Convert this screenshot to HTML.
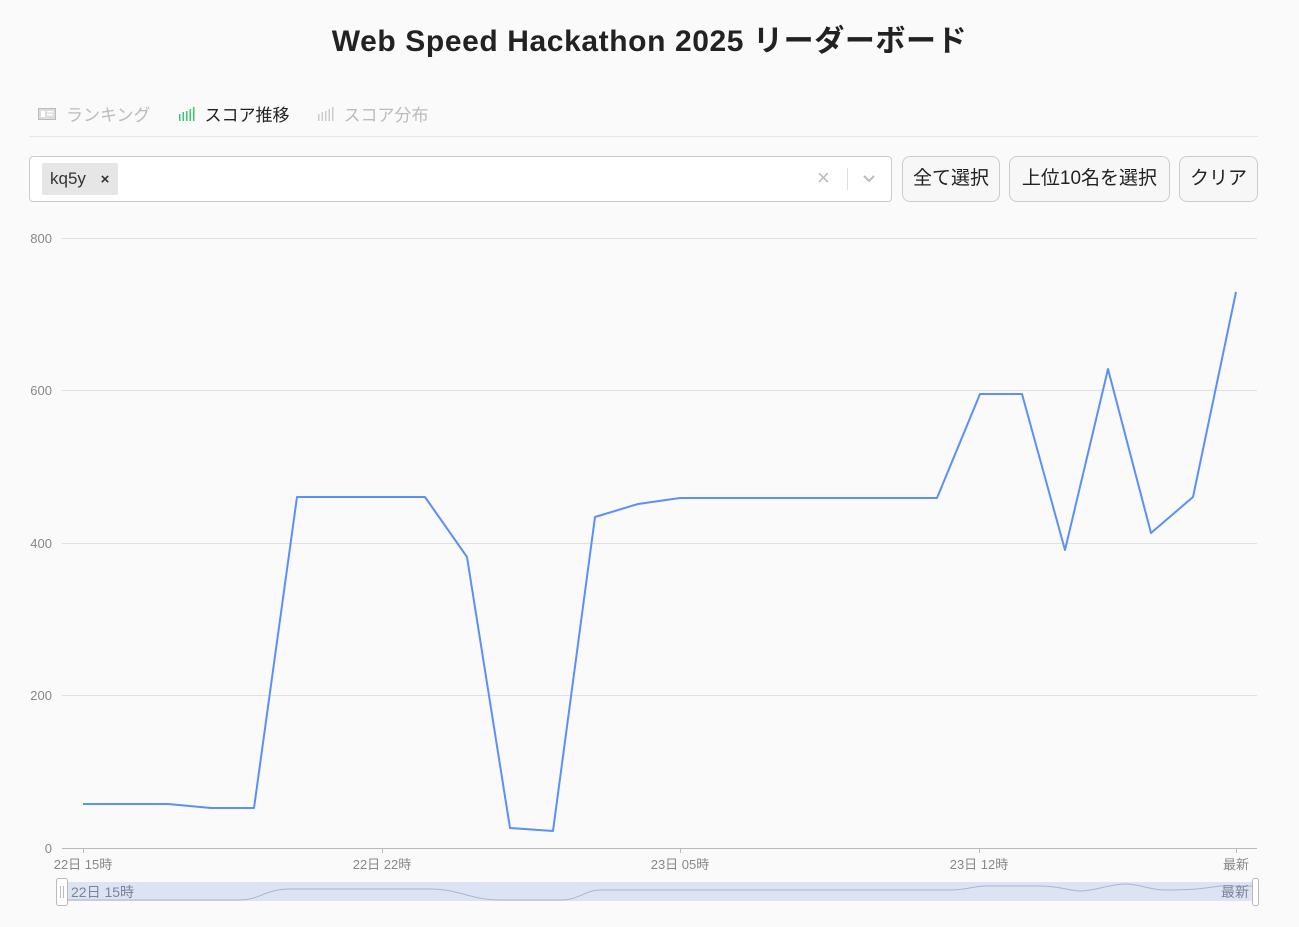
<!DOCTYPE html>
<html><head><meta charset="utf-8"><style>
body{margin:0;background:#fafafa;font-family:"Liberation Sans","Noto Sans CJK JP",sans-serif;width:1299px;height:927px;overflow:hidden;position:relative}
h1{position:absolute;top:16px;left:0;width:1299px;text-align:center;margin:0;font-size:30px;font-weight:bold;color:#222;letter-spacing:0.6px}
.tabs{position:absolute;top:101px;left:38px;font-size:17px;display:flex;gap:0}
.tab{display:flex;align-items:center;color:#bbb;margin-right:28px}
.tab.on{color:#222}
.line{position:absolute;top:136px;left:29px;width:1229px;height:1px;background:#e2e6ee}
.sel{position:absolute;top:156px;left:29px;width:861px;height:44px;border:1px solid #ccc;border-radius:4px;background:#fff}
.chip{position:absolute;left:12px;top:6px;height:32px;width:76px;background:#e6e6e6;border-radius:2px;font-size:17px;color:#333;line-height:32px;padding-left:8px;box-sizing:border-box}
.btn{position:absolute;top:156px;height:46px;border:1px solid #ccc;border-radius:8px;background:#f7f7f7;font-size:19px;color:#222;line-height:44px;text-align:center;box-sizing:border-box}
</style></head><body>
<h1>Web Speed Hackathon 2025 リーダーボード</h1>
<div class="tabs">
<div class="tab"><svg width="18" height="12" style="margin-right:10px"><rect x="0.5" y="0.5" width="17" height="11" fill="#ddd" stroke="#bbb"/><rect x="3" y="3" width="4" height="6" fill="#fff"/><rect x="9" y="3" width="6" height="1.5" fill="#fff"/><rect x="9" y="6" width="6" height="1.5" fill="#fff"/></svg>ランキング</div>
<div class="tab on"><svg width="16" height="14" style="margin-right:10px"><g fill="#2ecc71"><rect x="0" y="7" width="1.5" height="7"/><rect x="3.5" y="5" width="1.5" height="9"/><rect x="7" y="4" width="1.5" height="10"/><rect x="10.5" y="2" width="1.5" height="12"/><rect x="14" y="0" width="1.5" height="14"/></g></svg>スコア推移</div>
<div class="tab"><svg width="16" height="14" style="margin-right:10px"><g fill="#ccc"><rect x="0" y="7" width="1.5" height="7"/><rect x="3.5" y="5" width="1.5" height="9"/><rect x="7" y="4" width="1.5" height="10"/><rect x="10.5" y="2" width="1.5" height="12"/><rect x="14" y="0" width="1.5" height="14"/></g></svg>スコア分布</div>
</div>
<div class="line"></div>
<div class="sel"><div class="chip">kq5y <b style="margin-left:10px;font-size:15px">×</b></div>
<div style="position:absolute;left:787px;top:8px;font-size:22px;color:#bbb">×</div>
<div style="position:absolute;left:817px;top:11px;width:1px;height:22px;background:#ddd"></div>
<svg style="position:absolute;left:832px;top:17px" width="14" height="10"><path d="M2 2 L7 7 L12 2" fill="none" stroke="#bbb" stroke-width="2"/></svg>
</div>
<div class="btn" style="left:902px;width:98px">全て選択</div>
<div class="btn" style="left:1009px;width:161px">上位10名を選択</div>
<div class="btn" style="left:1179px;width:79px">クリア</div>
<svg style="position:absolute;left:0;top:0" width="1299" height="927">
<g stroke="#e0e0e0" stroke-width="1"><line x1="62" y1="238.5" x2="1257" y2="238.5"/><line x1="62" y1="390.5" x2="1257" y2="390.5"/><line x1="62" y1="543.5" x2="1257" y2="543.5"/><line x1="62" y1="695.5" x2="1257" y2="695.5"/></g>
<line x1="62" y1="848.5" x2="1257" y2="848.5" stroke="#bbb"/>
<g stroke="#bbb"><line x1="83.5" y1="848" x2="83.5" y2="853"/><line x1="382.5" y1="848" x2="382.5" y2="853"/><line x1="680.5" y1="848" x2="680.5" y2="853"/><line x1="979.5" y1="848" x2="979.5" y2="853"/><line x1="1236.5" y1="848" x2="1236.5" y2="853"/></g>
<g font-family="Liberation Sans,Noto Sans CJK JP,sans-serif" font-size="13" fill="#888" text-anchor="end"><text x="52" y="243">800</text><text x="52" y="395">600</text><text x="52" y="548">400</text><text x="52" y="700">200</text><text x="52" y="853">0</text></g>
<g font-family="Liberation Sans,Noto Sans CJK JP,sans-serif" font-size="13" fill="#888" text-anchor="middle"><text x="83" y="869">22日 15時</text><text x="382" y="869">22日 22時</text><text x="680" y="869">23日 05時</text><text x="979" y="869">23日 12時</text><text x="1236" y="869">最新</text></g>
<polyline fill="none" stroke="#5b8ff9" stroke-width="2" stroke-linejoin="round" points="83,804 168,804 211,808 254,808 297,497 425,497 467,557 510,828 553,831 595,517 638,504 680,498 937,498 980,394 1022,394 1065,550 1108,369 1151,533 1193,497 1236,292"/>
<rect x="62" y="882" width="1190" height="19" fill="#dce3f3"/>
<path d="M62,900 L240,900 C260,900 265,889 290,889 L430,889 C460,889 470,900 500,900 L560,900 C580,900 585,890 600,890 L950,890 C965,890 975,886 985,886 L1040,886 C1060,886 1070,891 1080,891 C1095,891 1110,884 1125,884 C1140,884 1150,890 1165,890 C1190,890 1200,889 1220,886 L1252,886" fill="none" stroke="#aab6cc" stroke-width="1"/>
<rect x="56.5" y="878.5" width="11" height="27" rx="2" fill="#fff" stroke="#bbb"/>
<line x1="60.5" y1="886" x2="60.5" y2="898" stroke="#bbb"/><line x1="63.5" y1="886" x2="63.5" y2="898" stroke="#bbb"/>
<rect x="1252.5" y="878.5" width="6" height="27" rx="2" fill="#fff" stroke="#bbb"/>
<g font-family="Liberation Sans,Noto Sans CJK JP,sans-serif" font-size="14" fill="#7a8499"><text x="71" y="897">22日 15時</text><text x="1249" y="897" text-anchor="end">最新</text></g>
</svg>
</body></html>
